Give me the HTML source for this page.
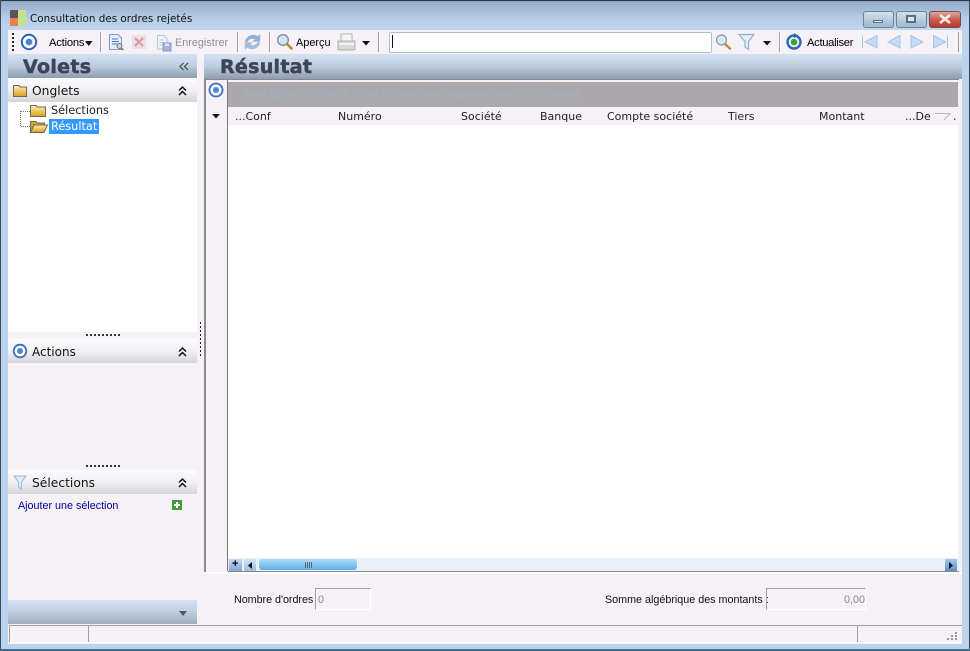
<!DOCTYPE html>
<html><head><meta charset="utf-8"><style>
html,body{margin:0;padding:0;background:#f5f1f6}
#w{position:relative;width:970px;height:651px;overflow:hidden;background:#f5f1f6;font-family:"DejaVu Sans",sans-serif;font-size:11px;color:#000}
#w>*{position:absolute}
.t{white-space:nowrap;line-height:14px}
.d{font-family:"DejaVu Sans",sans-serif;font-size:11.3px}
.l{font-family:"Liberation Sans",sans-serif;font-size:10.75px}
.sep{width:1px;height:20px;top:32px;background:#9aa0a8;border-right:1px solid #fff}
.hd{left:8px;width:189px;height:24px;background:linear-gradient(#fbfafc,#f2f0f3 50%,#d4d4d8)}
.grip{left:86px;width:34px;height:2px;background-image:linear-gradient(90deg,#333 2px,transparent 2px);background-size:4px 2px}
.hc{font-family:"DejaVu Sans",sans-serif;font-size:11px;top:110px;white-space:nowrap;line-height:14px;color:#222}
.big{font:bold 19px/24px 'DejaVu Sans',sans-serif;color:#3a4656;letter-spacing:.3px;-webkit-text-stroke:.5px #3a4656}
svg{overflow:visible}
</style></head><body><div id="w">
<!-- window frame -->
<div style="left:0;top:0;width:970px;height:651px;background:#bcd3ee"></div>
<div style="left:0;top:0;width:970px;height:30px;background:linear-gradient(#8fa8c4,#b5cce6 60%,#bed5f0)"></div>
<div style="left:0;top:0;width:970px;height:1px;background:#26323c"></div>
<div style="left:0;top:0;width:1px;height:651px;background:#3c4a58"></div>
<div style="right:0;top:0;width:1px;height:651px;background:#3c4a58"></div>
<div style="left:0;bottom:0;width:970px;height:2px;background:#3f6e8c"></div>
<!-- main content bg -->
<div style="left:8px;top:54px;width:954px;height:590px;background:#f5f1f6"></div>
<!-- app icon -->
<div style="left:10px;top:10px;width:16px;height:16px;background:linear-gradient(90deg,#555 0 50%,#c3e08a 50%)"></div>
<div style="left:10px;top:18px;width:8px;height:8px;background:#e8804a"></div>
<div class="t d" style="left:30px;top:12px;color:#111;font-size:10.4px">Consultation des ordres rejetés</div>
<!-- window buttons -->
<div style="left:863px;top:11px;width:29px;height:15px;border:1px solid #6e8298;border-radius:3px;background:linear-gradient(#d2e0ee,#b8cbdf 50%,#a2b8cf)"></div>
<div style="left:873px;top:20px;width:10px;height:3px;background:#f0f4f8;border:1px solid #5c6e80;box-sizing:border-box"></div>
<div style="left:896px;top:11px;width:29px;height:15px;border:1px solid #6e8298;border-radius:3px;background:linear-gradient(#d2e0ee,#b8cbdf 50%,#a2b8cf)"></div>
<div style="left:906px;top:15px;width:10px;height:8px;box-sizing:border-box;border:2px solid #5c6e80;background:#dfe8f2"></div>
<div style="left:929px;top:11px;width:30px;height:15px;border:1px solid #7b4a46;border-radius:3px;background:linear-gradient(#dca89e,#c8584c 55%,#b03a30)"></div>
<svg style="left:938px;top:14px" width="14" height="10"><path d="M2 1L12 9M12 1L2 9" stroke="#f4efe8" stroke-width="2.6"/></svg>
<!-- toolbar -->
<div style="left:8px;top:30px;width:954px;height:24px;background:#f5f1f6"></div>
<div style="left:12px;top:33px;width:2px;height:18px;background-image:linear-gradient(#222 2px,transparent 2px);background-size:2px 4px"></div>
<svg style="left:20px;top:33px" width="18" height="18"><circle cx="9" cy="9" r="7.2" fill="#fff" stroke="#2f63b4" stroke-width="2"/><circle cx="9" cy="9" r="3.4" fill="#4a86d4"/></svg>
<div class="t l" style="left:49px;top:36px;font-size:11.2px;letter-spacing:-.2px">Actions</div>
<svg style="left:85px;top:41px" width="8" height="5"><path d="M0 0H7.500L3.700 5Z" fill="#111"/></svg>
<div class="sep" style="left:100px"></div>
<svg style="left:108px;top:34px" width="16" height="17"><path d="M1.500 .5H10L13.500 4V15.500H1.500Z" fill="#e4ecf8" stroke="#7f9cc4"/><path d="M4 5H10M4 7.500H11M4 10H11" stroke="#4a7cc0"/><circle cx="11.500" cy="12" r="2.500" fill="#bcd8f2" stroke="#777"/><path d="M13 14L15.500 16" stroke="#a07a30" stroke-width="1.500"/></svg>
<div style="left:132px;top:35px;width:14px;height:14px;background:#e8e0e6"></div>
<svg style="left:135px;top:38px" width="8" height="8"><path d="M0 0L8 8M8 0L0 8" stroke="#dc9aa2" stroke-width="2.200"/></svg>
<svg style="left:156px;top:35px" width="16" height="17"><path d="M1.500 .5H8L11 4V14H1.500Z" fill="#f0f3f8" stroke="#bcc6d4"/><path d="M3.500 5H8M3.500 7.500H8M3.500 10H8" stroke="#b6c8e2"/><rect x="7" y="8" width="8" height="8" fill="#a8b2d8" stroke="#8c98c0"/><rect x="9" y="8.500" width="4" height="2.500" fill="#e8ecf4"/></svg>
<div class="t l" style="left:175px;top:36px;color:#8e8e8e;letter-spacing:.05px">Enregistrer</div>
<div class="sep" style="left:237px"></div>
<svg style="left:244px;top:33px" width="17" height="18"><path d="M1 9C2 3 9 0 13.500 3.500L16 1.500V8.500H8.500L11 6.500C8 4.500 5 6 3.500 9Z" fill="#8fb0d8" stroke="#aebfd4" stroke-width=".5"/><path d="M16 9.500C15 15 8 18 3.500 14.500L1 16.500V9.500H8.500L6 11.500C9 13.500 12 12 13.500 9.500Z" fill="#a4bcd8" stroke="#b8c4d4" stroke-width=".5"/></svg>
<div class="sep" style="left:269px"></div>
<svg style="left:276px;top:33px" width="17" height="18"><circle cx="7" cy="7" r="5.300" fill="#cfe6fa" stroke="#7d8a9c" stroke-width="1.300"/><path d="M11 11L15.500 15.500" stroke="#b58a3c" stroke-width="2.600" stroke-linecap="round"/></svg>
<div class="t l" style="left:296px;top:36px;font-size:10.9px">Aperçu</div>
<svg style="left:337px;top:33px" width="19" height="18"><rect x="4" y="1" width="11" height="7" fill="#f4f4f4" stroke="#b8b8b8"/><path d="M1 8H18V16C18 17 17 17 16 17H3C2 17 1 17 1 16Z" fill="#d8d8d8" stroke="#b0b0b0"/><path d="M2 11H17" stroke="#f2f2f2" stroke-width="2"/></svg>
<svg style="left:362px;top:41px" width="9" height="5"><path d="M0 0H8L4 4.500Z" fill="#111"/></svg>
<div class="sep" style="left:378px"></div>
<div style="left:389px;top:32px;width:321px;height:19px;background:#fff;border:1px solid #a8c0d4;border-radius:2px"></div>
<div style="left:392px;top:35px;width:1px;height:13px;background:#111"></div>
<svg style="left:715px;top:33px" width="17" height="18"><circle cx="6.500" cy="7" r="5" fill="#d6e8fa" stroke="#8a96a4" stroke-width="1.200"/><path d="M10 11L15 15.500" stroke="#b58a3c" stroke-width="2.400" stroke-linecap="round"/></svg>
<svg style="left:738px;top:33px" width="18" height="18"><path d="M1 1.500H16L10.500 8.500V16.500L7 14V8.500Z" fill="#e4eef8" stroke="#8fb0d0" stroke-width="1.200"/></svg>
<svg style="left:763px;top:41px" width="9" height="5"><path d="M0 0H8L4 4.500Z" fill="#111"/></svg>
<div class="sep" style="left:779px"></div>
<svg style="left:785px;top:33px" width="18" height="18"><circle cx="9" cy="9" r="6.500" fill="#e8f0f8" stroke="#2a68b0" stroke-width="2.400"/><circle cx="9" cy="9" r="3.300" fill="#3fa03c"/><path d="M9 0L14 3L9 5Z" fill="#2a68b0"/></svg>
<div class="t l" style="left:807px;top:36px;font-size:11.2px;letter-spacing:-.3px">Actualiser</div>
<svg style="left:860px;top:33px" width="96" height="18" fill="#c6dcf4" stroke="#a4c4e8"><path d="M2.500 2.500V15M17 2.500L5 9L17 15Z"/><path d="M40 2.500L28 9L40 15Z"/><path d="M51 2.500L63 9L51 15Z"/><path d="M73.500 2.500L85.500 9L73.500 15ZM87.500 2.500V15"/></svg>
<div style="left:958px;top:32px;width:1px;height:20px;background:#9aa0a8"></div>
<!-- volets -->
<div style="left:8px;top:54px;width:189px;height:24px;background:linear-gradient(#d5e2f2,#bccde0 50%,#8d9cae)"></div>
<div class="t big" style="left:23px;top:55px">Volets</div>
<svg style="left:179px;top:62px" width="10" height="9" fill="none" stroke="#444" stroke-width="1.200"><path d="M4.500 1L1 4.500L4.500 8M9 1L5.500 4.500L9 8"/></svg>
<div class="hd" style="top:78px"></div>
<svg style="left:13px;top:84px" width="15" height="13"><defs><linearGradient id="g" x1="0" y1="0" x2="0" y2="1"><stop offset="0" stop-color="#fff0b0"/><stop offset="1" stop-color="#d8a020"/></linearGradient></defs><path d="M.5 1.500H6L7 3H13.500V12.500H.5Z" fill="url(#g)" stroke="#6e6656"/></svg>
<div class="t" style="left:32px;top:84px;font-size:12.3px;color:#111">Onglets</div>
<svg style="left:178px;top:86px" width="9" height="10" fill="none" stroke="#111" stroke-width="1.500"><path d="M1 4.500L4.500 1L8 4.500M1 9L4.500 5.500L8 9"/></svg>
<div style="left:8px;top:102px;width:189px;height:230px;background:#fff"></div>
<svg style="left:18px;top:108px" width="14" height="20"><path d="M2.500 3V19M3 3.500H12M3 18.500H12" fill="none" stroke="#777" stroke-dasharray="1 1"/></svg>
<svg style="left:30px;top:104px" width="17" height="13"><path d="M.5 1.500H6L7 3H15.500V12.500H.5Z" fill="url(#g)" stroke="#6e6656"/></svg>
<svg style="left:30px;top:120px" width="18" height="13"><path d="M.5 1.500H6L7 3H14.500V5H4L.5 12.500Z" fill="#d8a828" stroke="#6e6656"/><path d="M.5 12.500L4 5H17.500L14 12.500Z" fill="url(#g)" stroke="#6e6656"/></svg>
<div class="t d" style="left:51px;top:104px;color:#222">Sélections</div>
<div style="left:49px;top:119px;width:50px;height:15px;background:#3399ff"></div>
<div class="t d" style="left:51px;top:120px;color:#fff">Résultat</div>
<!-- actions -->
<div class="grip" style="top:334px"></div>
<div class="hd" style="top:339px"></div>
<svg style="left:12px;top:343px" width="16" height="16"><circle cx="8" cy="8" r="6.300" fill="#fff" stroke="#3a6fb8" stroke-width="1.800"/><circle cx="8" cy="8" r="3" fill="#4a86d4"/></svg>
<div class="t" style="left:32px;top:345px;font-size:12px;color:#111">Actions</div>
<svg style="left:178px;top:347px" width="9" height="10" fill="none" stroke="#111" stroke-width="1.500"><path d="M1 4.500L4.500 1L8 4.500M1 9L4.500 5.500L8 9"/></svg>
<div class="grip" style="top:465px"></div>
<div class="hd" style="top:470px"></div>
<svg style="left:13px;top:475px" width="14" height="15"><path d="M1 1H13L8.500 7V14L5.500 12V7Z" fill="#dfeaf6" stroke="#9cb4cc"/></svg>
<div class="t" style="left:32px;top:476px;font-size:12.3px;color:#111">Sélections</div>
<svg style="left:178px;top:478px" width="9" height="10" fill="none" stroke="#111" stroke-width="1.500"><path d="M1 4.500L4.500 1L8 4.500M1 9L4.500 5.500L8 9"/></svg>
<div class="t l" style="left:18px;top:499px;color:#000099">Ajouter une sélection</div>
<svg style="left:172px;top:500px" width="10" height="10"><rect width="10" height="10" fill="#3f9c3f"/><path d="M5 2V8M2 5H8" stroke="#fff" stroke-width="2"/></svg>
<div style="left:8px;top:600px;width:189px;height:24px;background:linear-gradient(#d5e2f2,#bccde0 50%,#a0aebe)"></div>
<svg style="left:179px;top:611px" width="9" height="5"><path d="M0 0H8L4 5Z" fill="#555"/></svg>
<!-- splitter -->
<div style="left:200px;top:322px;width:1px;height:36px;background-image:linear-gradient(#222 2px,transparent 2px);background-size:1px 4px"></div>
<!-- Résultat -->
<div style="left:204px;top:54px;width:758px;height:25px;background:linear-gradient(#d5e2f2,#bccde0 50%,#8d9cae)"></div>
<div class="t big" style="left:220px;top:55px">Résultat</div>
<div style="left:204px;top:79px;width:2px;height:495px;background:#8a8a8a"></div>
<div style="left:204px;top:79px;width:755px;height:1px;background:#8a8a8a"></div>
<div style="left:206px;top:80px;width:21px;height:491px;background:#f5f1f6"></div>
<div style="left:227px;top:80px;width:1px;height:491px;background:#777"></div>
<svg style="left:208px;top:82px" width="16" height="16"><circle cx="8" cy="8" r="6.500" fill="#fff" stroke="#3a6fb8" stroke-width="1.800"/><circle cx="8" cy="8" r="3" fill="#4a86d4"/></svg>
<div style="left:228px;top:82px;width:730px;height:25px;background:#aaa8ab"></div>
<div class="t d" style="left:244px;top:88px;color:#a0b2cc;font-size:9.55px">Faire glisser à l'entête d'une colonne pour regrouper sur cette colonne.</div>
<div style="left:228px;top:107px;width:730px;height:18px;background:#f5f1f6"></div>
<div style="left:228px;top:125px;width:730px;height:433px;background:#fff"></div>
<svg style="left:212px;top:114px" width="9" height="5"><path d="M0 0H8L4 4.500Z" fill="#111"/></svg>
<div class="hc" style="left:235px">...Conf</div>
<div class="hc" style="left:338px">Numéro</div>
<div class="hc" style="left:461px">Société</div>
<div class="hc" style="left:540px">Banque</div>
<div class="hc" style="left:607px">Compte société</div>
<div class="hc" style="left:728px">Tiers</div>
<div class="hc" style="left:819px">Montant</div>
<div class="hc" style="left:905px">...De</div>
<svg style="left:935px;top:113px" width="16" height="8" fill="none" stroke="#bbb"><path d="M0 .5H15L9 7"/></svg>
<div class="hc" style="left:953px">.</div>
<!-- scrollbar -->
<div style="left:228px;top:558px;width:730px;height:13px;background:#eaf0fa"></div>
<div style="left:229px;top:559px;width:13px;height:12px;background:linear-gradient(#c6daf2,#7fa6d8)"></div>
<div class="t" style="left:232px;top:558px;font:bold 11px/13px 'Liberation Sans',sans-serif">+</div>
<div style="left:244px;top:559px;width:12px;height:12px;background:linear-gradient(#d6e4f4,#9cbce0)"></div>
<svg style="left:248px;top:562px" width="4" height="7"><path d="M4 0V7L0 3.500Z" fill="#111"/></svg>
<div style="left:259px;top:559px;width:98px;height:11px;border-radius:3px;background:linear-gradient(#b2dcf6,#5eaee8)"></div>
<div style="left:305px;top:562px;width:1px;height:6px;background:#567;box-shadow:2px 0 #567,4px 0 #567,6px 0 #567"></div>
<div style="left:945px;top:559px;width:12px;height:12px;background:linear-gradient(#a8c8ea,#5e90c8)"></div>
<svg style="left:949px;top:562px" width="4" height="7"><path d="M0 0V7L4 3.500Z" fill="#111"/></svg>
<div style="left:228px;top:571px;width:731px;height:1px;background:#888"></div>
<div style="left:204px;top:572px;width:758px;height:2px;background:#fff"></div>
<!-- footer -->
<div class="t l" style="left:234px;top:593px;color:#111;letter-spacing:-.03px">Nombre d'ordres</div>
<div style="left:315px;top:588px;width:54px;height:20px;border:1px solid;border-color:#a0a0a0 #fff #fff #a0a0a0"></div>
<div class="t l" style="left:318px;top:593px;color:#888">0</div>
<div class="t l" style="left:605px;top:593px;color:#111">Somme algébrique des montants :</div>
<div style="left:766px;top:588px;width:98px;height:20px;border:1px solid;border-color:#a0a0a0 #fff #fff #a0a0a0"></div>
<div class="t l" style="left:844px;top:593px;color:#888">0,00</div>
<!-- status -->
<div style="left:9px;top:625px;width:952px;height:16px;border-top:1px solid #a0a0a0;border-left:1px solid #a0a0a0;border-bottom:1px solid #fff;background:#f5f1f6"></div>
<div style="left:88px;top:626px;width:1px;height:16px;background:#a0a0a0"></div>
<div style="left:857px;top:626px;width:1px;height:16px;background:#a0a0a0"></div>
<svg style="left:947px;top:632px" width="11" height="9" fill="#999"><rect x="8" y="0" width="2" height="2"/><rect x="4" y="3" width="2" height="2"/><rect x="8" y="3" width="2" height="2"/><rect x="0" y="6" width="2" height="2"/><rect x="4" y="6" width="2" height="2"/><rect x="8" y="6" width="2" height="2"/></svg>
</div></body></html>
